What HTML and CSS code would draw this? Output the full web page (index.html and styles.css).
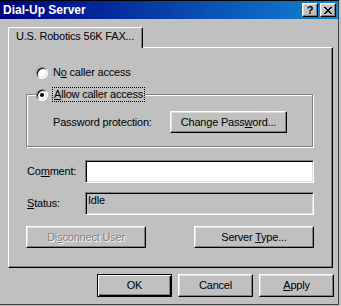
FILE: index.html
```html
<!DOCTYPE html>
<html lang="en">
<head>
	<meta charset="UTF-8">
	<title>Dial-Up Server</title>
	<link rel="stylesheet" href="styles.css">
</head>
<body>

<div class="window">
	<div class="titlebar">
		<span class="title">Dial-Up Server</span>
		<div class="tb-btns">
			<span class="tb-btn help">?</span>
			<span class="tb-btn">
				<svg width="8" height="7" viewBox="0 0 8 7"><path d="M0 0h2v1H0zM6 0h2v1H6zM1 1h2v1H1zM5 1h2v1H5zM2 2h4v1H2zM3 3h2v1H3zM2 4h4v1H2zM1 5h2v1H1zM5 5h2v1H5zM0 6h2v1H0zM6 6h2v1H6z" fill="#000"/></svg>
			</span>
		</div>
	</div>

	<div class="tabs">
		<div class="tab">U.S. Robotics 56K FAX...</div>
	</div>

	<div class="panel">
		<div class="option">
			<span class="radio"></span>
			<span>N<u>o</u> caller access</span>
		</div>

		<fieldset class="group">
			<legend>
				<span class="radio checked"></span>
				<span class="focus"><u>A</u>llow caller access</span>
			</legend>
			<div class="pw-row">
				<span class="pw-label">Password protection:</span>
				<button class="btn pw-btn">Change Pass<u>w</u>ord...</button>
			</div>
		</fieldset>

		<div class="field-row comment-row">
			<span class="field-label">Co<u>m</u>ment:</span>
			<div class="field"></div>
		</div>
		<div class="field-row status-row">
			<span class="field-label"><u>S</u>tatus:</span>
			<div class="field readonly">Idle</div>
		</div>

		<div class="btn-row">
			<button class="btn wide" disabled>Di<u>s</u>connect User</button>
			<button class="btn wide">Server <u>T</u>ype...</button>
		</div>
	</div>

	<div class="actions">
		<button class="btn default">OK</button>
		<button class="btn">Cancel</button>
		<button class="btn"><u>A</u>pply</button>
	</div>
</div>

</body>
</html>
```

FILE: styles.css
```css
*{margin: 0;padding: 0;box-sizing: border-box;}
body{
	background: #c0c0c0;
	font-family: "Liberation Sans", Arial, sans-serif;
	font-size: 11px;
	line-height: 13px;
	letter-spacing: -0.2px;
	color: #000;
}
u{text-underline-offset: 1px;}

/*窗口*/
.window{
	width: 339px;
	height: 305px;
	border-top: 1px solid #000;
	border-right: 1px solid #404040;
	border-bottom: 1px solid #404040;
}
.titlebar{
	height: 18px;
	display: flex;
	align-items: center;
	justify-content: space-between;
	padding: 0 2px 0 3px;
	background: linear-gradient(to right, #000080, #1084d0);
}
.title{
	color: #fff;
	font-weight: bold;
	font-size: 12px;
	letter-spacing: 0;
}
.tb-btns{
	display: flex;
	gap: 2px;
}
.tb-btn{
	width: 16px;
	height: 14px;
	display: flex;
	align-items: center;
	justify-content: center;
	background: #c0c0c0;
	border: 1px solid;
	border-color: #fff #000 #000 #fff;
	box-shadow: inset -1px -1px #808080, inset 1px 1px #dfdfdf;
}
.tb-btn.help{
	font-weight: bold;
	font-size: 11px;
	letter-spacing: 0;
}

/*选项卡*/
.tabs{
	display: flex;
	padding: 8px 0 0 8px;
}
.tab{
	width: 135px;
	height: 21px;
	margin-bottom: -1px;
	position: relative;
	z-index: 1;
	padding: 2px 0 0 7px;
	background: #c0c0c0;
	border-top: 1px solid #fff;
	border-left: 1px solid #fff;
	border-right: 1px solid #000;
	border-radius: 2px 2px 0 0;
	box-shadow: inset -1px 0 #808080;
}
.panel{
	width: 325px;
	height: 221px;
	margin-left: 8px;
	display: flex;
	flex-direction: column;
	padding: 18px 18px 0 17px;
	border: 1px solid;
	border-color: #fff #000 #000 #fff;
	box-shadow: inset -1px -1px #808080;
}

/*单选框*/
.option{
	display: flex;
	align-items: center;
	gap: 5px;
	height: 13px;
	margin-left: 10px;
}
.radio{
	display: inline-block;
	position: relative;
	width: 12px;
	height: 12px;
	flex-shrink: 0;
	background: #fff;
	border: 1px solid;
	border-color: #808080 #fff #fff #808080;
	border-radius: 50%;
	box-shadow: inset 1px 1px #000, inset -1px -1px #dfdfdf;
}
.radio.checked::after{
	content: '';
	position: absolute;
	left: 3px;
	top: 3px;
	width: 4px;
	height: 4px;
	border-radius: 50%;
	background: #000;
}

/*分组框*/
.group{
	width: 287px;
	margin-top: 8px;
	padding: 0 0 13px 9px;
	border: 1px solid #808080;
	box-shadow: inset 1px 1px #fff, 1px 1px #fff;
}
.group legend{
	display: flex;
	align-items: center;
	gap: 4px;
	padding: 0;
	background: #c0c0c0;
}
.focus{
	border: 1px dotted #000;
	padding: 0 1px;
}
.pw-row{
	display: flex;
	align-items: center;
	margin: 9px 0 0 17px;
}
.pw-label{width: 117px;}

/*按钮*/
.btn{
	font: inherit;
	letter-spacing: inherit;
	color: #000;
	background: #c0c0c0;
	height: 23px;
	width: 75px;
	border: 1px solid;
	border-color: #fff #000 #000 #fff;
	box-shadow: inset -1px -1px #808080, inset 1px 1px #dfdfdf;
	cursor: pointer;
}
.btn:disabled{
	color: #808080;
	text-shadow: 1px 1px #fff;
	cursor: default;
}
.btn.default{
	border-color: #000;
	box-shadow: inset 1px 1px #fff, inset -1px -1px #000, inset -2px -2px #808080;
}
.pw-btn{
	width: 117px;
	height: 22px;
}
.btn.wide{
	width: 120px;
	height: 22px;
}

/*文本框*/
.field-row{
	display: flex;
	align-items: center;
}
.comment-row{margin-top: 13px;}
.status-row{margin-top: 9px;}
.field-label{
	width: 59px;
	padding-left: 1px;
}
.field{
	width: 229px;
	height: 23px;
	background: #fff;
	padding: 1px 0 0 2px;
	border: 1px solid;
	border-color: #808080 #fff #fff #808080;
	box-shadow: inset 1px 1px #000, inset -1px -1px #dfdfdf;
}
.field.readonly{background: #c0c0c0;}

.btn-row{
	display: flex;
	justify-content: space-between;
	margin-top: 11px;
}

/*底部按钮*/
.actions{
	display: flex;
	justify-content: flex-end;
	gap: 6px;
	margin-top: 6px;
	padding-right: 4px;
}
```
